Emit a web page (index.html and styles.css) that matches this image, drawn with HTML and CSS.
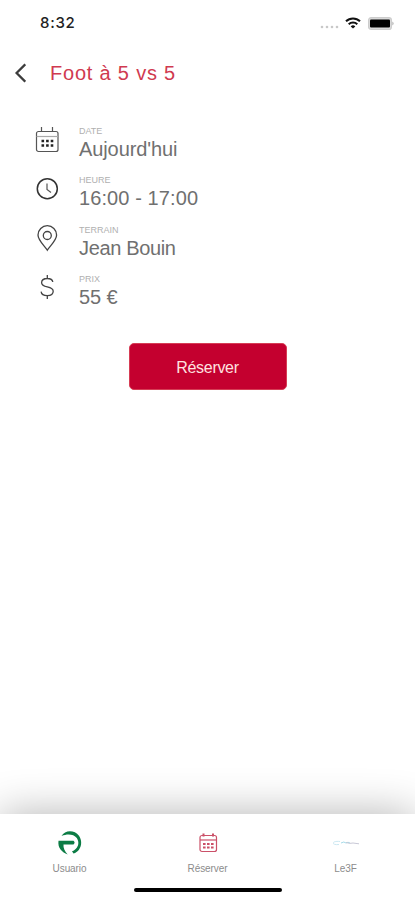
FILE: index.html
```html
<!DOCTYPE html>
<html lang="fr">
<head>
  <meta charset="UTF-8">
  <meta name="viewport" content="width=device-width, initial-scale=1.0">
  <title>Foot à 5 vs 5</title>
  <link rel="stylesheet" href="styles.css">
</head>
<body>
  <div class="screen">
    <div class="status-bar">
      <span class="time">8:32</span>
      <div class="status-icons">
        <svg class="signal" width="19" height="4" viewBox="0 0 19 4" fill="#c8c8c8">
          <circle cx="2" cy="2" r="1.3"/><circle cx="7" cy="2" r="1.3"/><circle cx="12" cy="2" r="1.3"/><circle cx="17" cy="2" r="1.3"/>
        </svg>
        <svg class="wifi" width="16" height="12" viewBox="0 0 16 12" fill="none" stroke="#111" stroke-width="2">
          <path d="M1 4.3a10 10 0 0 1 14 0M3.7 7.2a6.2 6.2 0 0 1 8.6 0"/>
          <path d="M8 11.6 5.7 9.4a3.3 3.3 0 0 1 4.6 0z" fill="#111" stroke="none"/>
        </svg>
        <svg class="battery" width="27" height="13" viewBox="0 0 27 13">
          <rect x=".6" y=".6" width="22.8" height="11.8" rx="2.5" fill="#ddd" stroke="#ccc" stroke-width="1.2"/>
          <rect x="2" y="2.5" width="20" height="8" rx="1" fill="#000"/>
          <path d="M24.5 4.5q2 2 0 4z" fill="#999"/>
        </svg>
      </div>
    </div>

    <header class="header">
      <svg width="12" height="20" viewBox="0 0 12 20" fill="none" stroke="#3c3c3c" stroke-width="2.3">
        <path d="M11.3 1.2 2.6 10l8.7 8.8"/>
      </svg>
      <h1>Foot à 5 vs 5</h1>
    </header>

    <main>
      <ul class="details">
        <li>
          <svg width="26" height="28" viewBox="0 0 26 28" fill="none" stroke="#555" stroke-width="1.2">
            <rect x="2.5" y="6.5" width="21.5" height="20" rx="2"/>
            <path d="M2.5 11.5h21.5" stroke="#aaa"/>
            <path d="M7.5 2v4.5M18.5 2v4.5"/>
            <path d="M7.5 16h12M7.5 20.5h12" stroke="#222" stroke-width="2.6" stroke-dasharray="2.6 2"/>
          </svg>
          <div>
            <span class="label">DATE</span>
            <span class="value">Aujourd'hui</span>
          </div>
        </li>
        <li>
          <svg width="26" height="28" viewBox="0 0 26 28" fill="none" stroke="#333" stroke-width="1.5">
            <circle cx="13.3" cy="14.7" r="10"/>
            <path d="M13 9.500v6l4 3" stroke="#555" stroke-width="1.2"/>
          </svg>
          <div>
            <span class="label">HEURE</span>
            <span class="value hour">16:00 - 17:00</span>
          </div>
        </li>
        <li>
          <svg width="26" height="28" viewBox="0 0 26 28" fill="none" stroke="#444" stroke-width="1.3">
            <path d="M13.3 26.2C10 21.2 4 16.2 4 11a9.3 9.3 0 0 1 18.6 0c0 5.2-6 10.2-9.3 15.2z"/>
            <circle cx="13.3" cy="11.5" r="4"/>
          </svg>
          <div>
            <span class="label">TERRAIN</span>
            <span class="value place">Jean Bouin</span>
          </div>
        </li>
        <li>
          <svg width="26" height="28" viewBox="0 0 26 28" fill="none" stroke="#444" stroke-width="1.3">
            <path d="M13.3 2v3.5M13.3 22.5V26M18.8 9c-.3-2.300-2.500-3.500-5.500-3.500-3.500 0-5.700 1.600-5.700 4.200 0 2.500 2.300 3.400 5.700 4.200 3.700.8 5.900 1.800 5.900 4.400 0 2.700-2.300 4.300-5.900 4.300-3.500 0-5.900-1.400-6.200-4"/>
          </svg>
          <div>
            <span class="label">PRIX</span>
            <span class="value">55 €</span>
          </div>
        </li>
      </ul>

      <button class="book">Réserver</button>
    </main>

    <nav class="tabs">
      <div class="tab">
        <svg width="26" height="26" viewBox="0 0 26 26" fill="#0c7c45">
          <path d="M4.5 6C8-.2 17.5-.2 22 5.8 26.8 13 23 22 16.5 23.5L15 21.3C21.5 18.5 22.8 12.5 19.8 8 16.5 4 10.5 3.5 4.5 6z"/>
          <path d="M1.5 10.8H16.5q2.2 1.8 0 3.6H6.5c-.5 3.5 1.5 7 4.2 10C5 22.5.5 18 1.5 10.8z"/>
        </svg>
        <span>Usuario</span>
      </div>
      <div class="tab">
        <svg width="26" height="26" viewBox="0 0 26 26" fill="none" stroke="#cb5068" stroke-width="1.2">
          <rect x="5" y="5.5" width="16.5" height="16" rx="2"/>
          <path d="M5 10h16.5"/>
          <path d="M8.5 3.5v3M18 3.5v3" stroke-width="2"/>
          <path d="M8 14h11M8 17.5h11" stroke-width="1.8" stroke-dasharray="2.6 1.4"/>
        </svg>
        <span>Réserver</span>
      </div>
      <div class="tab">
        <svg width="26" height="26" viewBox="0 0 26 26" fill="none" stroke-width="1">
          <path d="M7 11.5C-2 10.5-2 15.5 6 14.5" stroke="#cbe8f2"/>
          <path d="M8 13q3-2 5 0 2-1.5 4 0" stroke="#a6dbea"/>
          <path d="M13 12.5q4 1.5 7 .5l6 .8" stroke="#c8c8d6"/>
        </svg>
        <span>Le3F</span>
      </div>
      <div class="home-indicator"></div>
    </nav>
  </div>
</body>
</html>
```
FILE: styles.css
```css
/* General Styles */
* {
  box-sizing: border-box;
}

body {
  margin: 0;
  font-family: "Liberation Sans", Arial, sans-serif;
  background-color: #fff;
  color: #707070;
}

.screen {
  display: flex;
  flex-direction: column;
  height: 900px;
  overflow: hidden;
}

/* Status bar */
.status-bar {
  display: flex;
  justify-content: space-between;
  align-items: center;
  height: 46px;
  padding: 0 20px 0 40px;
}

.time {
  font-family: Inter, sans-serif;
  font-size: 15px;
  line-height: 18px;
  font-weight: 500;
  letter-spacing: 0.7px;
  color: #222;
}

.status-icons {
  display: flex;
  align-items: center;
}

.signal {
  margin-top: 8px;
}

.wifi {
  margin: 0 7px 0 6px;
}

/* Header */
.header {
  display: flex;
  align-items: center;
  height: 54px;
  padding-left: 14px;
}

h1 {
  margin: 0 0 0 24px;
  font-size: 20px;
  font-weight: 400;
  letter-spacing: 0.8px;
  color: #d03a50;
}

/* Booking details */
.details {
  list-style: none;
  margin: 0;
  padding: 25px 0 0 34px;
}

.details li {
  display: flex;
  height: 49.3px;
}

.details li > div {
  margin-left: 19px;
}

.label,
.value {
  display: block;
  white-space: nowrap;
}

.label {
  padding-top: 1px;
  font-size: 9px;
  line-height: 11px;
  color: #b0b0b0;
}

.value {
  font-size: 20px;
  line-height: 24px;
  letter-spacing: -0.1px;
}

.hour {
  letter-spacing: 0.1px;
}

.place {
  letter-spacing: -0.35px;
}

.book {
  display: block;
  width: 158px;
  height: 47px;
  margin: 21px auto 0;
  padding: 2px 0 0;
  border: 1px solid #d63d55;
  border-radius: 5px;
  background-color: #c4002f;
  color: #ffe3e0;
  font-family: inherit;
  font-size: 16px;
  letter-spacing: -0.3px;
}

/* Bottom tabs */
.tabs {
  display: grid;
  grid-template-columns: repeat(3, 138px);
  justify-content: center;
  align-content: start;
  height: 86px;
  margin-top: auto;
  padding-top: 16px;
  background-color: #fff;
  box-shadow: 0 0 44px rgba(0, 0, 0, 0.3);
}

.tab {
  display: flex;
  flex-direction: column;
  align-items: center;
  font-size: 10px;
  line-height: 12px;
  letter-spacing: -0.1px;
  color: #8c8c8c;
}

.tab span {
  margin-top: 7px;
}

.home-indicator {
  grid-column: 1 / -1;
  justify-self: center;
  width: 148px;
  height: 4px;
  margin-top: 13px;
  border-radius: 2px;
  background-color: #000;
}
```
